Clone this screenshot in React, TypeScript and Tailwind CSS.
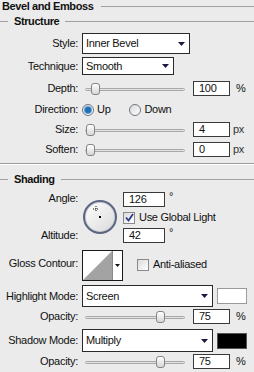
import React from "react";

const Label = ({ children }: { children: React.ReactNode }) => (
  <div className="w-[78px] shrink-0 text-right leading-[13px]">{children}</div>
);

const Arrow = () => (
  <svg width="7" height="4" viewBox="0 0 7 4" className="shrink-0">
    <path d="M0 0H7L3.5 4Z" fill="#1a1a40" />
  </svg>
);

const Dropdown = ({ value, size }: { value: string; size: string }) => (
  <div
    className={`flex items-center justify-between border border-[#2a2a2a] bg-white pl-[3px] pr-[4px] ${size}`}
  >
    <span>{value}</span>
    <Arrow />
  </div>
);

const NumBox = ({ value, size }: { value: string; size: string }) => (
  <div
    className={`flex items-center border border-[#3a3a3a] bg-white pl-[5px] leading-none ${size}`}
  >
    {value}
  </div>
);

const Slider = ({ thumb }: { thumb: number }) => (
  <div className="relative ml-[2px] h-[14px] w-[102px] shrink-0">
    <div className="absolute left-[1px] right-[1px] top-[6px] h-[3px] rounded-full border border-[#a8a8a8] bg-[#e2e2e2]" />
    <div
      className="absolute top-[1px] h-[12px] w-[9px] rounded-[3px] border border-[#858585] bg-gradient-to-b from-white to-[#d6d6d6]"
      style={{ left: thumb }}
    />
  </div>
);

const SliderRow = ({
  label,
  value,
  unit,
  thumb,
  top,
}: {
  label: string;
  value: string;
  unit: string;
  thumb: number;
  top: string;
}) => (
  <div className={`flex h-[15px] items-center ${top}`}>
    <Label>{label}</Label>
    <div className="ml-[4px] flex items-center">
      <Slider thumb={thumb} />
      <NumBox value={value} size="ml-[7px] h-[15px] w-[37px]" />
      <span className={unit === "%" ? "ml-[6px]" : "ml-[3px] text-[#333]"}>{unit}</span>
    </div>
  </div>
);

const Check = ({ checked }: { checked?: boolean }) => (
  <div className="flex h-[12px] w-[12px] shrink-0 items-center justify-center border border-[#8a8a8a] bg-gradient-to-br from-[#dcdcdc] to-white">
    {checked && (
      <svg width="9" height="9" viewBox="0 0 9 9">
        <path d="M1 4.5L3.5 7.5L8 1" stroke="#2c3a8c" strokeWidth="1.8" fill="none" />
      </svg>
    )}
  </div>
);

const Radio = ({ on }: { on?: boolean }) => (
  <div className="flex h-[12px] w-[12px] shrink-0 items-center justify-center rounded-full border border-[#6f7680] bg-gradient-to-br from-[#d9d9d9] to-white">
    {on && <div className="h-[6px] w-[6px] rounded-full bg-[#1f6fb8] shadow-[0_0_0_1px_#6aa3d6]" />}
  </div>
);

const Heading = ({ text, indent }: { text: string; indent?: boolean }) => (
  <div className="flex h-[12px] items-center">
    {indent ? <div className="h-px w-[8px] bg-[#a0a0a0]" /> : null}
    <span className={`font-bold tracking-[-0.4px] ${indent ? "ml-[6px]" : "ml-[2px]"}`}>{text}</span>
    <div className={`h-px flex-1 bg-[#a0a0a0] ${indent ? "ml-[6px]" : "ml-[8px]"}`} />
  </div>
);

export default function App() {
  return (
    <div className="h-[372px] w-[254px] overflow-hidden bg-[#ebebeb] font-['Liberation_Sans',Arial,sans-serif] text-[11px] leading-[13px] tracking-[-0.3px] text-[#111]">
      <Heading text="Bevel and Emboss" />
      <div className="mt-[3px]">
        <Heading text="Structure" indent />
      </div>

      <div className="mt-[6px] flex items-center">
        <Label>Style:</Label>
        <div className="ml-[4px]">
          <Dropdown value="Inner Bevel" size="h-[21px] w-[108px]" />
        </div>
      </div>
      <div className="mt-[3px] flex items-center">
        <Label>Technique:</Label>
        <div className="ml-[4px]">
          <Dropdown value="Smooth" size="h-[18px] w-[92px]" />
        </div>
      </div>

      <SliderRow label="Depth:" value="100" unit="%" thumb={7} top="mt-[6px]" />

      <div className="mt-[7px] flex h-[13px] items-center">
        <Label>Direction:</Label>
        <div className="ml-[4px] flex items-center">
          <Radio on />
          <span className="ml-[3px]">Up</span>
          <div className="ml-[19px]">
            <Radio />
          </div>
          <span className="ml-[3px]">Down</span>
        </div>
      </div>

      <SliderRow label="Size:" value="4" unit="px" thumb={2} top="mt-[6px]" />
      <SliderRow label="Soften:" value="0" unit="px" thumb={2} top="mt-[5px]" />

      <div className="mt-[6px] h-px bg-[#9c9c9c] shadow-[0_1px_0_#fff]" />

      <div className="mt-[9px]">
        <Heading text="Shading" indent />
      </div>

      <div className="mt-[7px] flex">
        <div className="flex h-[51px] w-[78px] shrink-0 flex-col justify-between text-right">
          <div className="leading-[13px]">Angle:</div>
          <div className="leading-[15px]">Altitude:</div>
        </div>
        <div className="ml-[5px] mt-[8px] relative h-[34px] w-[34px] shrink-0 rounded-full border-2 border-[#5b6680] bg-gradient-to-br from-white to-[#dadada] shadow-[inset_0_0_0_1px_#c9ccd6]">
          <svg width="34" height="34" viewBox="0 0 34 34" className="absolute -left-[2px] -top-[2px]">
            <path d="M13 6V12M10 9H16" stroke="#111" strokeWidth="1" strokeDasharray="1 1" />
            <rect x="16" y="16" width="2" height="2" fill="#000" />
          </svg>
        </div>
        <div className="ml-[6px] flex flex-col">
          <div className="flex items-start">
            <NumBox value="126" size="h-[15px] w-[42px]" />
            <span className="ml-[4px] leading-[9px]">°</span>
          </div>
          <div className="mt-[4px] flex h-[13px] items-center">
            <Check checked />
            <span className="ml-[4px]">Use Global Light</span>
          </div>
          <div className="mt-[4px] flex items-start">
            <NumBox value="42" size="h-[15px] w-[42px]" />
            <span className="ml-[4px] leading-[9px]">°</span>
          </div>
        </div>
      </div>

      <div className="mt-[7px] flex items-start">
        <div className="mt-[7px]">
          <Label>Gloss Contour:</Label>
        </div>
        <div className="ml-[4px] flex h-[31px] w-[41px] border border-[#1a1a1a] bg-white">
          <svg width="29" height="29" viewBox="0 0 29 29" className="shrink-0">
            <path d="M0 29L29 0V29Z" fill="#a3a3a3" />
          </svg>
          <div className="flex flex-1 items-center justify-center border-l border-[#8a8a8a]">
            <svg width="5" height="3" viewBox="0 0 5 3">
              <path d="M0 0H5L2.5 3Z" fill="#111" />
            </svg>
          </div>
        </div>
        <div className="ml-[14px] mt-[8px] flex items-center">
          <Check />
          <span className="ml-[4px]">Anti-aliased</span>
        </div>
      </div>

      <div className="mt-[4px] flex items-center">
        <Label>Highlight Mode:</Label>
        <div className="ml-[4px]">
          <Dropdown value="Screen" size="h-[22px] w-[131px]" />
        </div>
        <div className="ml-[4px] h-[16px] w-[30px] border border-[#9a9a9a] bg-white" />
      </div>
      <SliderRow label="Opacity:" value="75" unit="%" thumb={72} top="mt-[2px]" />

      <div className="mt-[5px] flex items-center">
        <Label>Shadow Mode:</Label>
        <div className="ml-[4px]">
          <Dropdown value="Multiply" size="h-[23px] w-[131px]" />
        </div>
        <div className="ml-[4px] h-[16px] w-[30px] border border-[#555] bg-black" />
      </div>
      <SliderRow label="Opacity:" value="75" unit="%" thumb={72} top="mt-[2px]" />
    </div>
  );
}
